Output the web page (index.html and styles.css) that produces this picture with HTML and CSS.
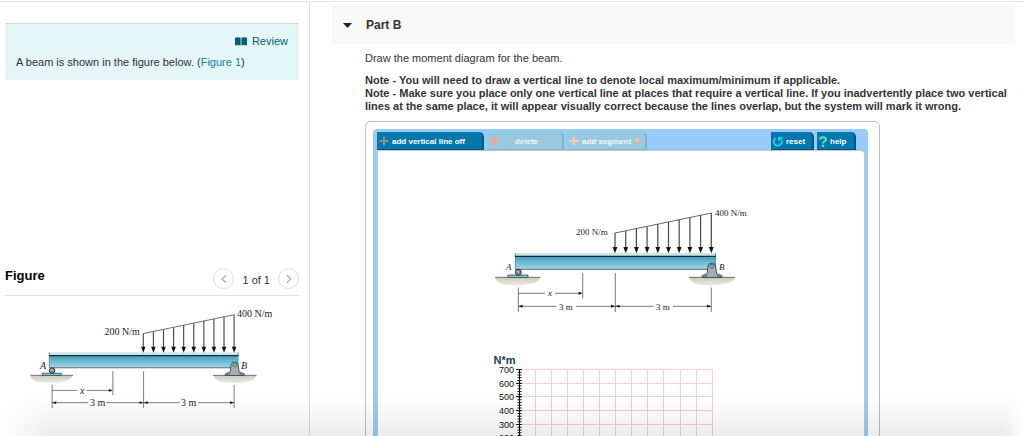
FILE: index.html
```html
<!DOCTYPE html>
<html lang="en">
<head>
<meta charset="utf-8">
<title>Beam moment diagram</title>
<link rel="stylesheet" href="styles.css">
</head>
<body>
<div class="page">
  <aside class="side">
    <section class="problem">
      <a class="review" href="#review">
        <svg class="review-icon" viewBox="0 0 12 9" width="12" height="9" aria-hidden="true"><path d="M0 .7Q3 0 5.600 .7V8.400Q3 7.700 0 8.400ZM12 .7Q9 0 6.400 .7V8.400Q9 7.700 12 8.400Z" fill="#045f73"/></svg>
        Review
      </a>
      <p class="statement">A beam is shown in the figure below. (<a href="#figure">Figure 1</a>)</p>
    </section>
    <section id="figure">
      <div class="figure-head">
        <h2 class="figure-title">Figure</h2>
        <button class="round" aria-label="Previous figure"><svg viewBox="0 0 10 10" width="10" height="10"><path d="M7 1.200 3 5l4 3.800"/></svg></button>
        <span class="count">1 of 1</span>
        <button class="round" aria-label="Next figure"><svg viewBox="0 0 10 10" width="10" height="10"><path d="M3 1.200 7 5 3 8.800"/></svg></button>
      </div>
      <svg class="side-figure" viewBox="0 3 274 120" width="274" height="120" role="img" aria-label="Beam with distributed load">
        <defs>
          <linearGradient id="web" x1="0" y1="0" x2="0" y2="1">
            <stop offset="0" stop-color="#36a0bf"/><stop offset="1" stop-color="#a9d6e5"/>
          </linearGradient>
          <linearGradient id="ground" x1="0" y1="0" x2="0" y2="1">
            <stop offset="0" stop-color="#c9c8b8"/><stop offset="1" stop-color="#eeeee6"/>
          </linearGradient>
          <g id="beam">
            <path d="M15 87H60.500Q58 94 48 94Q38 97 28 95Q17 95 15 87ZM209 87H255Q253 94 243 94Q232 97 222 95Q211 94 209 87Z" fill="url(#ground)"/>
            <path d="M15 87.300H60.500M209 87.300H255" stroke="#6f706b"/>
            <rect x="28" y="85" width="20" height="2.600" fill="#7fbfd2" stroke="#31515c" stroke-width=".8"/>
            <rect x="34.700" y="63" width="201" height="3.500" fill="#cfe3ea"/>
            <rect x="35.300" y="66" width="200" height="13.300" fill="url(#web)"/>
            <path d="M35.300 79.300V63M235.500 79.300V63" stroke="#4a7c8c" stroke-width=".8"/>
            <path d="M35 66.300H235.800" stroke="#172c34" stroke-width="1.300"/>
            <path d="M35 79.300H235.800" stroke="#4b6b76"/>
            <circle cx="38.300" cy="82.300" r="2.900" fill="#8f9799" stroke="#222"/>
            <circle cx="37.500" cy="81.500" r=".8" fill="#ddd"/>
            <path d="M222 87.500V85.500L227 84L228 76Q228.500 73 232 73Q235 73 235.600 76L236.700 84L242 85.500V87.500Z" fill="#a9adb0" stroke="#3b464a" stroke-width=".9"/>
            <path d="M222 87V85.500L227 84.600V87ZM242 87V85.500L237 84.600V87Z" fill="#528fa3"/>
            <circle cx="232" cy="76.300" r="2" fill="#78c0d7" stroke="#32525d" stroke-width=".8"/>
            <path d="M135 43L231.500 23" stroke="#555" stroke-width=".9"/>
            <path class="rods" d="M135 43V60M145.700 41V60M156.400 39V60M167.100 36.500V60M177.800 34V60M188.500 32V60M199.200 29.500V60M209.900 27.500V60M220.600 25V60M231.300 23V60"/>
            <path fill="#111" d="M132.600 57h4.800L135 63.300ZM143.300 57h4.800l-2.400 6.300ZM154 57h4.800l-2.400 6.300ZM164.700 57h4.800l-2.400 6.300ZM175.400 57h4.800l-2.400 6.300ZM186.100 57h4.800l-2.400 6.300ZM196.800 57h4.800l-2.400 6.300ZM207.500 57h4.800l-2.400 6.300ZM218.200 57h4.800l-2.400 6.300ZM228.900 57h4.800l-2.400 6.300Z"/>
            <path class="dims" d="M38.300 97.500V122M102.700 83V108.500M135.300 83V122M231.300 97.500V122M38.300 103.300H65M75 103.300H102M38.300 116.300H76.500M96 116.300H173.500M193 116.300H231"/>
            <path fill="#111" d="M102.500 103.300l-4-1.500v3ZM38.600 116.300l4-1.500v3ZM135 116.300l-4-1.500v3ZM135.600 116.300l4-1.500v3ZM231 116.300l-4-1.500v3Z"/>
          </g>
        </defs>
        <use href="#beam" transform="scale(.943)"/>
        <g class="label label-side">
          <text x="88.500" y="42">200 N/m</text><text x="221" y="24">400 N/m</text>
          <text x="24" y="76" class="it">A</text><text x="225" y="76" class="it">B</text>
          <text x="64" y="101" class="it">x</text><text x="74" y="113">3 m</text><text x="165" y="113">3 m</text>
        </g>
      </svg>
    </section>
  </aside>

  <main class="main">
    <header class="part">
      <button class="toggle" aria-label="Collapse Part B"><svg viewBox="0 0 9 5" width="9" height="5"><path d="M0 0H9L4.500 5Z" fill="#222"/></svg></button>
      <h1 class="part-title">Part B</h1>
    </header>
    <div class="content">
      <p class="task">Draw the moment diagram for the beam.</p>
      <p class="note"><b>Note - You will need to draw a vertical line to denote local maximum/minimum if applicable.</b></p>
      <p class="note"><b>Note - Make sure you place only one vertical line at places that require a vertical line. If you inadvertently place two vertical lines at the same place, it will appear visually correct because the lines overlap, but the system will mark it wrong.</b></p>
      <div class="applet">
        <div class="frame">
          <div class="toolbar">
            <button class="tool tool-line"><svg viewBox="0 0 10 10" width="10" height="10"><path d="M5 .5V9.500M.5 5H9.500" stroke="#8b8f8e" stroke-width="2"/></svg>add vertical line off</button>
            <button class="tool tool-delete" disabled><svg viewBox="0 0 10 10" width="10" height="10"><path d="M1.500 1 8.500 9M8.500 1 1.500 9" stroke="#fba58a" stroke-width="2"/></svg><span>delete</span></button>
            <button class="tool tool-segment" disabled><svg viewBox="0 0 10 10" width="10" height="10"><path d="M5 .5V9.500M.5 5H9.500" stroke="#fdcb9c" stroke-width="2.200"/></svg>add segment<svg viewBox="0 0 6 6" width="6" height="6"><path d="M0 .5H6L3 6Z" fill="#fdbd88"/></svg></button>
            <span class="spacer"></span>
            <button class="tool tool-reset"><svg viewBox="0 0 10 11" width="10" height="11"><path d="M2.600 2.200A4 4 0 1 0 8.200 3.500" fill="none" stroke="#17d9ee" stroke-width="1.800"/><path d="M4.800 1H9.800V2.400H8.200L5.200 5.600Z" fill="#17d9ee"/></svg>reset</button>
            <button class="tool tool-help"><svg viewBox="0 0 8 11" width="8" height="11"><path d="M1 3.600Q1 1.200 4 1.200T7 3.500Q7 4.800 5.500 5.300Q4.100 5.800 4.100 7.500" fill="none" stroke="#4df2a5" stroke-width="1.900"/><path d="M3 8.700H5.200V10.800H3Z" fill="#4df2a5"/></svg>help</button>
          </div>
          <div class="canvas">
            <svg class="beam-figure" viewBox="0 0 290 130" width="290" height="130" role="img" aria-label="Beam with distributed load">
              <use href="#beam"/>
              <g class="label label-main">
                <text x="96" y="45">200 N/m</text><text x="235" y="26">400 N/m</text>
                <text x="26" y="80" class="it">A</text><text x="239" y="80" class="it">B</text>
                <text x="68" y="106" class="it">x</text><text x="79" y="120">3 m</text><text x="176" y="120">3 m</text>
              </g>
            </svg>
            <svg class="chart" viewBox="0 0 250 160" width="250" height="160" role="img" aria-label="Moment chart">
              <path class="grid" d="M39 29.500H232.500M39 43.500H232.500M39 56.500H232.500M39 70.500H232.500M39 84.500H232.500M39 98.500H232.500M39 112.500H232.500M39 125.500H232.500M55.500 29V160M71.500 29V160M87.500 29V160M103.500 29V160M119.500 29V160M135.500 29V160M151.500 29V160M167.500 29V160M183.500 29V160M200.500 29V160M216.500 29V160M232.500 29V160"/>
              <path d="M39.500 29V160" stroke="#111"/>
              <path d="M39.500 29V160" stroke="#111" stroke-width="4" stroke-dasharray="1 1.750"/>
              <path d="M36 29.500H42M36 43.500H42M36 56.500H42M36 70.500H42M36 84.500H42M36 98.500H42" stroke="#111"/>
              <text class="unit" x="13.500" y="24">N*m</text>
              <g class="ticks">
                <text x="34" y="33">700</text><text x="34" y="47">600</text><text x="34" y="60">500</text><text x="34" y="74">400</text><text x="34" y="88">300</text><text x="34" y="101">200</text>
              </g>
            </svg>
          </div>
        </div>
      </div>
    </div>
  </main>
</div>
<div class="fade"></div>
</body>
</html>
```

FILE: styles.css
```css
* { box-sizing: border-box; }
body {
  margin: 0;
  padding-top: 1px;
  height: 100vh;
  overflow: hidden;
  background: #fff;
  color: #333;
  font: 11px/13px "Liberation Sans", Arial, sans-serif;
}
h1, h2, p { margin: 0; }
button { font: inherit; padding: 0; border: 0; background: none; }
a { color: #0d7f9e; text-decoration: none; }
svg { flex: none; }

.page {
  display: grid;
  grid-template-columns: 310fr 714fr;
  min-height: 100%;
  border-top: 1px solid #e6e8e8;
}
.side { padding: 21px 10px 0 5px; border-right: 1px solid #d3dde8; }
.problem {
  display: flex;
  flex-direction: column;
  gap: 5px;
  padding: 9px 11px 10px;
  border-top: 1px solid #cbdcdc;
  background: #e4f6f6;
  line-height: 16px;
}
.review { display: flex; align-items: center; align-self: flex-end; gap: 5px; color: #045f73; }
.figure-head {
  display: flex;
  align-items: flex-start;
  gap: 8px;
  margin-top: 188px;
  padding-bottom: 6px;
  border-bottom: 1px solid #dfe1e1;
}
.figure-title { flex: 1; color: #000; font-size: 13px; line-height: 16px; }
.count { padding-top: 4px; line-height: 16px; }
.round {
  display: grid;
  place-items: center;
  width: 21px;
  height: 21px;
  border: 1px solid #dcdcdc;
  border-radius: 50%;
}
.round path { fill: none; stroke: #aaa; stroke-width: 1.2; }
.side-figure { display: block; margin-left: 11px; }
.rods { stroke: #484848; stroke-width: 1.2; }
.dims { stroke: #555; stroke-width: .8; }
.label { font-family: "Liberation Serif", "Times New Roman", serif; fill: #222; }
.label-side { font-size: 10px; }
.label-main { font-size: 9px; }
.it { font-style: italic; }

.main { min-width: 0; padding: 4px 9px 0 22px; }
.part { display: flex; align-items: center; gap: 14px; height: 38px; padding-left: 11px; background: #f8f8f8; }
.toggle { display: flex; }
.part-title { font-size: 12px; line-height: 16px; }
.content { padding: 8px 0 0 33px; }
.task { margin-bottom: 9px; }
.applet {
  max-width: 515px;
  margin-top: 8px;
  padding: 7px 11px 11px 7px;
  border: 1px solid #bdbdbd;
  border-radius: 5px;
}
.frame { padding: 3px 3px 4px 4px; border-radius: 4px; background: #96cbfa; }
.toolbar { display: flex; gap: 3px; padding-right: 9px; }
.tool {
  display: flex;
  align-items: center;
  gap: 3px;
  height: 18px;
  padding: 1px 3px 0 2px;
  border-right: 2px solid #03547e;
  border-bottom: 1px solid #03547e;
  border-top-right-radius: 5px;
  background: #0577af;
  color: #fff;
  font-size: 8px;
  font-weight: bold;
}
.tool:disabled { border-color: #83b3cc; background: #99c8e1; color: #eff7fb; }
.tool-line { width: 107px; }
.tool-delete { width: 77px; }
.tool-delete span { flex: 1; padding-right: 8px; text-align: center; }
.tool-segment { width: 80px; }
.tool-reset { width: 43px; }
.tool-help { width: 39px; }
.spacer { flex: 1; }
.canvas {
  display: flex;
  flex-direction: column;
  gap: 20px;
  padding: 39px 0 20px 102px;
  border: 1px solid #c4c7c9;
  border-top-right-radius: 4px;
  background: #fff;
}
.grid { fill: none; stroke: #fbcccc; }
.unit { font-size: 11px; font-weight: bold; fill: #173f4e; }
.ticks { font-size: 9px; fill: #111; text-anchor: end; }

.fade {
  position: fixed;
  inset: auto 0 0 0;
  height: 40px;
  background: linear-gradient(to bottom, rgba(0, 0, 0, 0), rgba(0, 0, 0, .08));
  mask-image: linear-gradient(to right, transparent, #000 50px, #000 calc(100% - 20px), transparent);
  pointer-events: none;
}
```
